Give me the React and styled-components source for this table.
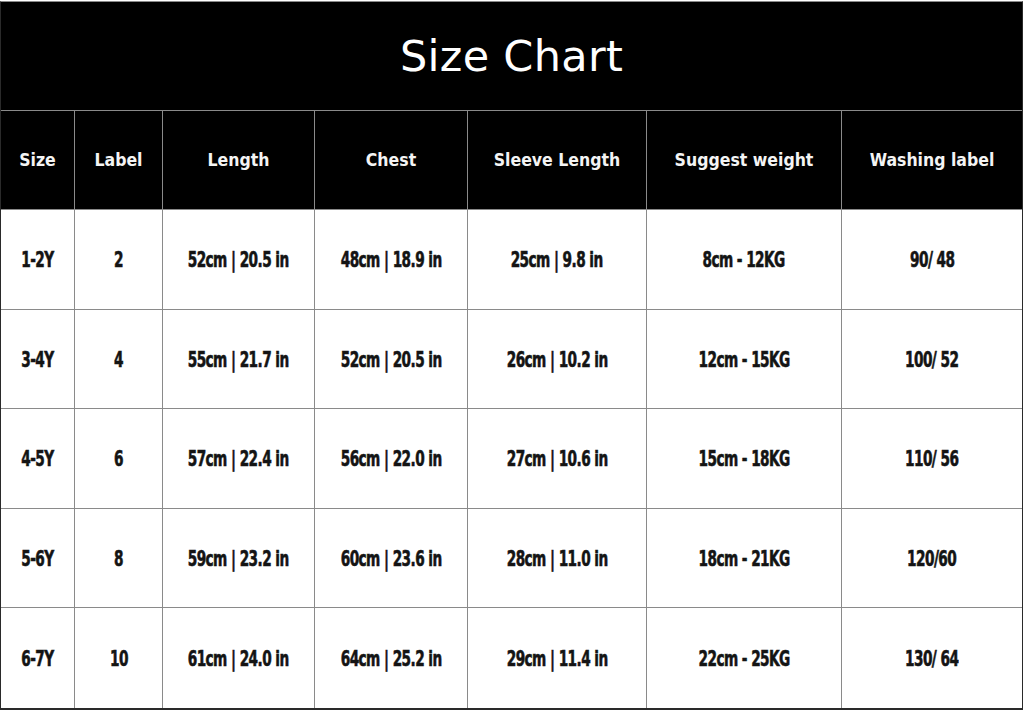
import styled, { createGlobalStyle } from 'styled-components'

const GlobalStyle = createGlobalStyle`
  html, body {
    margin: 0;
    padding: 0;
    background: #fff;
  }
`

const Chart = styled.div`
  width: 1023px;
  margin-top: 1px;
  border: 1px solid #2a2a2a;
  border-top-color: #8a8a8a;
  border-bottom-width: 2px;
  box-sizing: border-box;
  background: #fff;
`

const Title = styled.div`
  height: 108px;
  background: #000;
  color: #fff;
  display: flex;
  align-items: center;
  justify-content: center;
  font-family: "DejaVu Sans", "Open Sans", sans-serif;
  font-size: 43px;
  letter-spacing: 0.3px;
  border-bottom: 1px solid #8a8a8a;
`

const Grid = styled.div`
  display: grid;
  grid-template-columns: 74px 88px 152px 153px 179px 195px 1fr;
  grid-template-rows: 99px repeat(5, 99.5px);
`

const Cell = styled.div`
  display: flex;
  align-items: center;
  justify-content: center;
  box-sizing: border-box;
  border-right: 1px solid #8a8a8a;
  border-bottom: ${p => (p.$last ? 'none' : '1px solid #8a8a8a')};
  &:nth-child(7n) {
    border-right: none;
  }
`

const HeadCell = styled(Cell)`
  background: #000;
  color: #f4f4f4;
  font-family: "DejaVu Sans Condensed", "DejaVu Sans", sans-serif;
  font-weight: bold;
  font-size: 17.5px;
`

const BodyCell = styled(Cell)`
  color: #141414;
  font-family: "DejaVu Sans Condensed", "DejaVu Sans", sans-serif;
  font-weight: bold;
  font-size: 22px;
  letter-spacing: -0.8px;
  padding-top: 1px;
`

// condensed heavy face, close to the Impact-like numbers in the chart
const Squeezed = styled.span`
  display: inline-block;
  white-space: nowrap;
  transform: scaleX(0.69);
  -webkit-text-stroke: 0.6px #141414;
`

const headers = ['Size', 'Label', 'Length', 'Chest', 'Sleeve Length', 'Suggest weight', 'Washing label']

const rows = [
  ['1-2Y', '2', '52cm | 20.5 in', '48cm | 18.9 in', '25cm | 9.8 in', '8cm - 12KG', '90/ 48'],
  ['3-4Y', '4', '55cm | 21.7 in', '52cm | 20.5 in', '26cm | 10.2 in', '12cm - 15KG', '100/ 52'],
  ['4-5Y', '6', '57cm | 22.4 in', '56cm | 22.0 in', '27cm | 10.6 in', '15cm - 18KG', '110/ 56'],
  ['5-6Y', '8', '59cm | 23.2 in', '60cm | 23.6 in', '28cm | 11.0 in', '18cm - 21KG', '120/60'],
  ['6-7Y', '10', '61cm | 24.0 in', '64cm | 25.2 in', '29cm | 11.4 in', '22cm - 25KG', '130/ 64'],
]

export default function App() {
  return (
    <>
      <GlobalStyle />
      <Chart>
        <Title>Size Chart</Title>
        <Grid>
          {headers.map(h => (
            <HeadCell key={h}>{h}</HeadCell>
          ))}
          {rows.map((row, i) =>
            row.map((v, j) => (
              <BodyCell key={i + '-' + j} $last={i === rows.length - 1}>
                <Squeezed>{v}</Squeezed>
              </BodyCell>
            ))
          )}
        </Grid>
      </Chart>
    </>
  )
}
